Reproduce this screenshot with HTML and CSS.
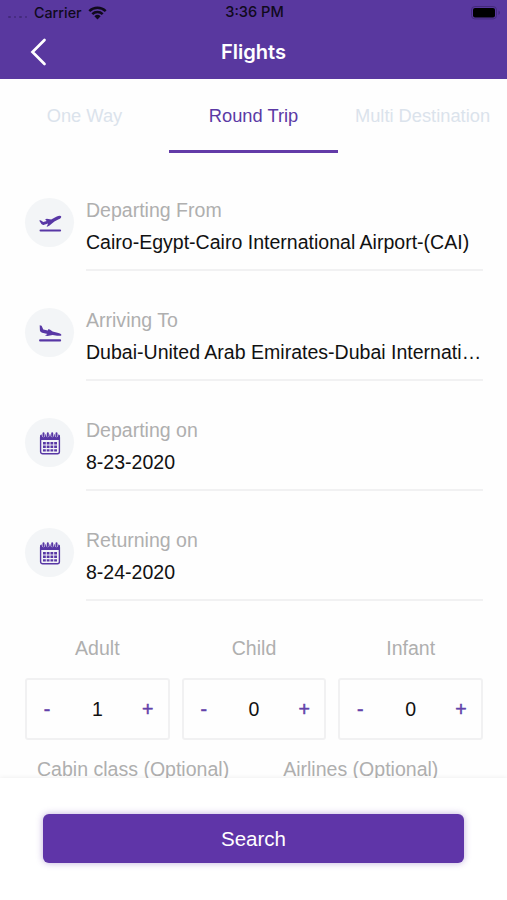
FILE: index.html
```html
<!DOCTYPE html>
<html lang="en">
<head>
    <meta charset="UTF-8">
    <title>Flights</title>
    <meta name="viewport" content="width=device-width, initial-scale=1.0">
    <link rel="stylesheet" href="styles.css">
</head>
<body>
    <svg class="symbols" width="0" height="0">
        <symbol id="calendar" viewBox="0 0 22 24">
            <path d="M2.5 3.5h17A1.5 1.5 0 0 1 21 5v4H1V5a1.5 1.5 0 0 1 1.5-1.5z" fill="currentColor"/>
            <rect x="1.6" y="4.5" width="18.8" height="18.3" rx="2" fill="none" stroke="currentColor" stroke-width="1.4"/>
            <path d="M4.5 4.6V3M8.8 4.6V3M13.2 4.6V3M17.5 4.6V3" stroke="#f3f5f7" stroke-width="3.4" stroke-linecap="round"/>
            <path d="M4.5 5V2.2M8.8 5V2.2M13.2 5V2.2M17.5 5V2.2" stroke="currentColor" stroke-width="2" stroke-linecap="round"/>
            <path d="M4 12.2h14M4 15.8h14M4 19.4h14" stroke="currentColor" stroke-width="2.4" stroke-dasharray="2.8 .93"/>
        </symbol>
    </svg>

    <div class="app">
        <header class="header">
            <div class="status">
                <div class="carrier">
                    <span class="dots"><i></i><i></i><i></i><i></i></span>
                    <span>Carrier</span>
                    <svg class="wifi" width="19" height="14" viewBox="0 0 19 14">
                        <path d="M1.3 5.2a11.7 11.7 0 0 1 16.4 0M4.3 8.2a7.4 7.4 0 0 1 10.4 0" fill="none" stroke="currentColor" stroke-width="2.5"/>
                        <path d="M6.4 10.3a4.5 4.5 0 0 1 6.2 0L9.5 13.5z" fill="currentColor"/>
                    </svg>
                </div>
                <span class="time">3:36 PM</span>
                <svg class="battery" width="30" height="14" viewBox="0 0 30 14">
                    <rect x=".5" y=".5" width="25" height="12.4" rx="3.4" fill="none" stroke="#432a7b"/>
                    <rect x="2" y="2" width="22" height="9.4" rx="2" fill="#000"/>
                    <path d="M27.5 4.5a2.4 2.4 0 0 1 0 4.4z" fill="#432a7b"/>
                </svg>
            </div>
            <div class="navbar">
                <svg class="back" width="18" height="28" viewBox="0 0 18 28">
                    <path d="M15.5 2 3.5 14l12 12" fill="none" stroke="#fff" stroke-width="2.7" stroke-linecap="round"/>
                </svg>
                <h1>Flights</h1>
            </div>
        </header>

        <nav class="tabs">
            <a class="tab">One Way</a>
            <a class="tab active">Round Trip</a>
            <a class="tab">Multi Destination</a>
        </nav>

        <main class="form">
            <div class="field">
                <div class="icon">
                    <svg width="24" height="20" viewBox="0 0 24 20">
                        <path d="M1.2 7.6l1.5-.4 2.6 1.9 3.4-1.2-1.6-1.5 1.7-.6 4.4.7 5.1-2.7c2-1 4.5-1.3 4.9-.4.4 1-1.1 2.3-3 3.2l-3.8 2-5.2 4.2-2.6 1.1 1.5-3.4-3.9 1.2c-1.1.4-2.1.2-2.8-.6z" fill="currentColor"/>
                        <path d="M2.5 17.4h19.6" stroke="currentColor" stroke-width="2" stroke-linecap="round"/>
                    </svg>
                </div>
                <div class="text">
                    <div class="label">Departing From</div>
                    <div class="value">Cairo-Egypt-Cairo International Airport-(CAI)</div>
                </div>
            </div>
            <div class="field">
                <div class="icon">
                    <svg width="24" height="20" viewBox="0 0 24 20">
                        <path d="M1.7 2.3l1.9.5 1.7 3.7 4.6 1 .2-1.2 1.7.2 2.8 2.1 4.9 1.1c2.4.5 4.1 1.4 3.9 2.3-.2.9-2.2 1-4.3.7l-4.5-.6-5.2 1-2.4-.5 2.5-1.7-5.3-1.2c-1.4-.4-2.2-1.1-2.3-2.4z" fill="currentColor"/>
                        <path d="M2.1 17.4h20" stroke="currentColor" stroke-width="2.1" stroke-linecap="round"/>
                    </svg>
                </div>
                <div class="text">
                    <div class="label">Arriving To</div>
                    <div class="value">Dubai-United Arab Emirates-Dubai International Airport-(DXB)</div>
                </div>
            </div>
            <div class="field">
                <div class="icon"><svg width="22" height="24"><use href="#calendar"/></svg></div>
                <div class="text">
                    <div class="label">Departing on</div>
                    <div class="value">8-23-2020</div>
                </div>
            </div>
            <div class="field">
                <div class="icon"><svg width="22" height="24"><use href="#calendar"/></svg></div>
                <div class="text">
                    <div class="label">Returning on</div>
                    <div class="value">8-24-2020</div>
                </div>
            </div>

            <div class="passengers">
                <div class="passenger">
                    <div class="label">Adult</div>
                    <div class="counter"><button>-</button><span>1</span><button>+</button></div>
                </div>
                <div class="passenger">
                    <div class="label">Child</div>
                    <div class="counter"><button>-</button><span>0</span><button>+</button></div>
                </div>
                <div class="passenger">
                    <div class="label">Infant</div>
                    <div class="counter"><button>-</button><span>0</span><button>+</button></div>
                </div>
            </div>

            <div class="options">
                <div class="label">Cabin class (Optional)</div>
                <div class="label">Airlines (Optional)</div>
            </div>
        </main>

        <footer class="footer">
            <button class="search">Search</button>
        </footer>
    </div>
</body>
</html>
```
FILE: styles.css
```css
* {
    box-sizing: border-box;
}
body {
    margin: 0;
    background: #fefefe;
    color: #111;
    font-family: "Liberation Sans", Arial, sans-serif;
}
.symbols {
    display: block;
}
.app {
    display: flex;
    flex-direction: column;
    height: 900px;
    overflow: hidden;
}
.header {
    flex: none;
    height: 79px;
    background: #59389f;
    font-family: Inter, sans-serif;
}
.status {
    display: grid;
    grid-template-columns: 1fr auto 1fr;
    align-items: center;
    height: 26px;
    padding: 0 6px 0 8px;
    color: #100a1c;
    font-size: 14.3px;
    line-height: 17px;
    font-weight: 500;
}
.carrier,
.time {
    margin-bottom: 1px;
}
.time {
    font-size: 14.6px;
}
.carrier {
    display: flex;
    align-items: center;
}
.dots {
    display: flex;
    gap: 3px;
    margin: 9px 7px 0 0;
}
.dots i {
    width: 2.5px;
    height: 2.5px;
    border-radius: 50%;
    background: #432a7b;
}
.wifi {
    margin-left: 6px;
}
.battery {
    justify-self: end;
}
.navbar {
    display: grid;
    grid-template-columns: 1fr auto 1fr;
    align-items: center;
    height: 52px;
    padding-left: 29px;
    padding-right: 29px;
}
h1 {
    margin: 0;
    color: #fff;
    font-size: 20.1px;
    font-weight: 600;
}
.tabs {
    display: grid;
    flex: none;
    grid-template-columns: repeat(3, 1fr);
    height: 74px;
    font-size: 18.3px;
    line-height: 74px;
    text-align: center;
    white-space: nowrap;
}
.tab {
    height: 74px;
    color: #dbe3ec;
    border-bottom: 3px solid transparent;
}
.tab.active {
    color: #5b39a5;
    border-color: #633ba8;
}
.form {
    flex: 1;
    min-height: 0;
    padding: 45px 24px 0 25px;
    overflow: hidden;
}
.field {
    display: flex;
    height: 110px;
}
.icon {
    display: flex;
    flex: none;
    align-items: center;
    justify-content: center;
    width: 49px;
    height: 49px;
    margin-right: 12px;
    border-radius: 50%;
    background: #f3f5f7;
    color: #5837a5;
}
.text {
    flex: 1;
    min-width: 0;
    height: 73px;
    border-bottom: 2px solid #f1f1f2;
}
.label {
    color: #afafaf;
    font-size: 19.55px;
    line-height: 24px;
}
.value {
    margin-top: 8px;
    overflow: hidden;
    font-size: 19.55px;
    line-height: 25px;
    text-overflow: ellipsis;
    white-space: nowrap;
}
.passengers {
    display: grid;
    grid-template-columns: repeat(3, 1fr);
    gap: 12px;
    margin-top: -2px;
}
.passenger {
    text-align: center;
}
.counter {
    display: flex;
    align-items: center;
    justify-content: space-between;
    height: 62px;
    margin-top: 18px;
    padding: 0 15px;
    border: 2px solid #f1f1f2;
    border-radius: 3px;
    font-size: 19.55px;
}
.counter button {
    display: flex;
    justify-content: center;
    width: 10px;
    padding: 1px 0 0;
    border: none;
    background: none;
    color: #6342aa;
    font: inherit;
    -webkit-text-stroke: 0.5px #6342aa;
}
.options {
    display: flex;
    gap: 54px;
    margin-top: 17px;
    padding-left: 12px;
}
.footer {
    z-index: 1;
    flex: none;
    height: 122px;
    padding: 36px 43px 0;
    background: #fff;
    box-shadow: 0 0 5px rgba(0, 0, 0, 0.08);
}
.search {
    width: 100%;
    height: 49px;
    border: none;
    border-radius: 6px;
    background: #5f35a8;
    box-shadow: 0 0 7px rgba(95, 53, 168, 0.4);
    color: #fff;
    font: 20.5px "Liberation Sans", Arial, sans-serif;
}
```
